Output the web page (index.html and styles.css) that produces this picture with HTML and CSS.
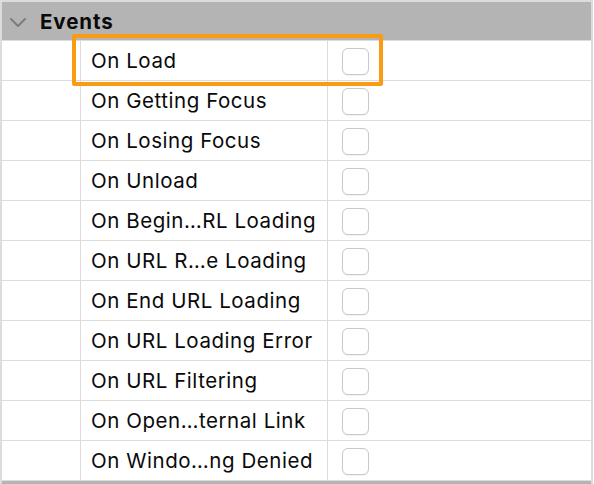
FILE: index.html
```html
<!DOCTYPE html>
<html>
<head>
<meta charset="utf-8">
<link rel="stylesheet" href="styles.css">
</head>
<body>
<div class="panel">
  <div class="header">
    <svg class="chev" width="18" height="11" viewBox="0 0 18 11"><path d="M2 2 L9 9 L16 2" fill="none" stroke="#7d7d7d" stroke-width="2" stroke-linecap="round" stroke-linejoin="round"/></svg>
    <span class="title">Events</span>
  </div>
  <div class="rows">
    <div class="row"><div class="c1"></div><div class="c2">On Load</div><div class="c3"><span class="box"></span></div></div>
    <div class="row"><div class="c1"></div><div class="c2">On Getting Focus</div><div class="c3"><span class="box"></span></div></div>
    <div class="row"><div class="c1"></div><div class="c2">On Losing Focus</div><div class="c3"><span class="box"></span></div></div>
    <div class="row"><div class="c1"></div><div class="c2">On Unload</div><div class="c3"><span class="box"></span></div></div>
    <div class="row"><div class="c1"></div><div class="c2">On Begin…RL Loading</div><div class="c3"><span class="box"></span></div></div>
    <div class="row"><div class="c1"></div><div class="c2">On URL R…e Loading</div><div class="c3"><span class="box"></span></div></div>
    <div class="row"><div class="c1"></div><div class="c2">On End URL Loading</div><div class="c3"><span class="box"></span></div></div>
    <div class="row"><div class="c1"></div><div class="c2">On URL Loading Error</div><div class="c3"><span class="box"></span></div></div>
    <div class="row"><div class="c1"></div><div class="c2">On URL Filtering</div><div class="c3"><span class="box"></span></div></div>
    <div class="row"><div class="c1"></div><div class="c2">On Open…ternal Link</div><div class="c3"><span class="box"></span></div></div>
    <div class="row"><div class="c1"></div><div class="c2">On Windo…ng Denied</div><div class="c3"><span class="box"></span></div></div>
    <div class="highlight"></div>
  </div>
  <div class="footer"></div>
</div>
</body>
</html>
```
FILE: styles.css
```css
html, body {
  margin: 0;
  padding: 0;
  background: #ffffff;
}
body {
  font-family: Inter, "Liberation Sans", sans-serif;
  color: #0a0a0a;
  width: 594px;
  height: 484px;
  overflow: hidden;
}
.panel {
  width: 593px;
  border-top: 2px solid #dcdcdc;
  border-left: 2px solid #dcdcdc;
  border-right: 2px solid #dcdcdc;
  box-sizing: border-box;
}
.header {
  height: 38px;
  background: #b4b4b4;
  border-bottom: 1px solid #dcdcdc;
  display: flex;
  align-items: center;
}
.chev {
  margin-left: 7px;
  margin-top: 3px;
}
.title {
  margin-left: 13px;
  font-weight: 700;
  font-size: 20.5px;
  letter-spacing: 0.9px;
  color: #0a0a0a;
}
.rows {
  position: relative;
}
.row {
  display: flex;
  height: 39px;
  border-bottom: 1px solid #dcdcdc;
}
.c1 {
  width: 78px;
  border-right: 1px solid #dcdcdc;
}
.c2 {
  width: 247px;
  border-right: 1px solid #dcdcdc;
  padding-left: 10px;
  box-sizing: border-box;
  display: flex;
  align-items: center;
  font-size: 20.5px;
  letter-spacing: 0.55px;
  white-space: nowrap;
}
.c3 {
  flex: 1;
  display: flex;
  align-items: center;
  padding-left: 14px;
}
.box {
  display: block;
  width: 25px;
  height: 25px;
  border: 1px solid #c9c9c9;
  border-radius: 6px;
  background: #ffffff;
  box-shadow: 0 0.5px 1px rgba(0,0,0,0.06);
  margin-top: 2px;
}
.highlight {
  position: absolute;
  left: 70px;
  top: -7px;
  width: 311px;
  height: 52px;
  border: 4px solid #f99b13;
  border-radius: 2px;
  box-sizing: border-box;
}
.footer {
  height: 3px;
  background: #b4b4b4;
}
```
